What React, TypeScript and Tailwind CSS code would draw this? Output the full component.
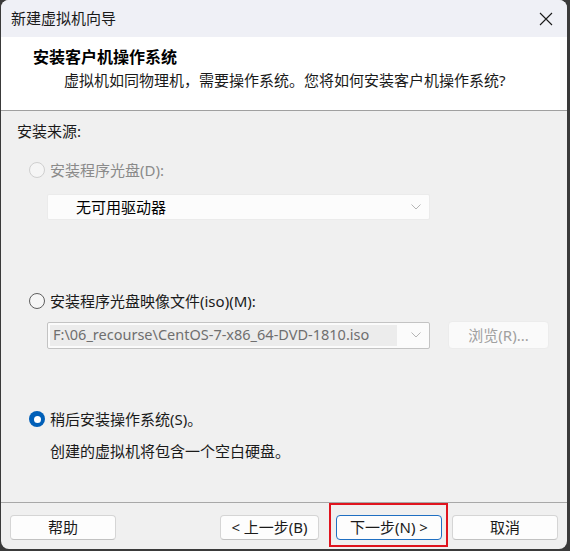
import React from 'react';

const font = { fontFamily: '"Noto Sans", "Noto Sans CJK SC", sans-serif' };

const Chevron: React.FC = () => (
  <svg width="10" height="6" viewBox="0 0 10 6" className="shrink-0">
    <path d="M0.5 0.5 L5 5 L9.5 0.5" fill="none" stroke="#b5b5b5" strokeWidth="1" />
  </svg>
);

const Radio: React.FC<{ state: 'disabled' | 'off' | 'on' }> = ({ state }) => {
  if (state === 'on') {
    return (
      <span className="flex h-4 w-4 shrink-0 items-center justify-center rounded-full bg-[#005fb8]">
        <span className="h-[7px] w-[7px] rounded-full bg-white" />
      </span>
    );
  }
  return (
    <span
      className={
        state === 'disabled'
          ? 'h-4 w-4 shrink-0 rounded-full border border-[#cfcfcf] bg-[#f5f5f5]'
          : 'h-4 w-4 shrink-0 rounded-full border border-[#5f5f5f] bg-[#f6f6f6]'
      }
    />
  );
};

const Button: React.FC<{ label: string; primary?: boolean; className?: string }> = ({ label, primary, className }) => (
  <button
    className={
      'flex h-[25px] items-center justify-center rounded-[4px] border bg-[#fdfdfd] text-[15px] text-[#1b1b1b] ' +
      (primary ? 'border-[#1f6fc2] ' : 'border-[#d5d5d5] border-b-[#c2c2c2] ') +
      (className ?? '')
    }
  >
    {label}
  </button>
);

export default function App() {
  return (
    <div className="flex h-[551px] w-[570px] bg-[#3a3a3a] pb-[2px] pl-[1px] pr-[3px]" style={font}>
      <div className="flex flex-1 flex-col overflow-hidden rounded-[8px] bg-[#f0f0f0]">
        {/* title bar */}
        <div className="flex h-[37px] shrink-0 items-center justify-between bg-[#eff0f6] pl-[10px] pr-[14px]">
          <span className="text-[15px] text-[#1a1a1a]">新建虚拟机向导</span>
          <svg width="14" height="14" viewBox="0 0 14 14">
            <path d="M1 1 L13 13 M13 1 L1 13" stroke="#1a1a1a" strokeWidth="1.1" />
          </svg>
        </div>

        {/* header */}
        <div className="flex h-[73px] shrink-0 flex-col bg-white pl-[32px] pt-[9px]">
          <div className="text-[16px] font-bold leading-[22px] text-black">安装客户机操作系统</div>
          <div className="pl-[31px] pt-[2px] text-[15px] leading-[20px] text-[#1a1a1a]">
            虚拟机如同物理机，需要操作系统。您将如何安装客户机操作系统?
          </div>
        </div>
        <div className="h-px shrink-0 bg-[#a0a0a0]" />

        {/* body */}
        <div className="flex flex-1 flex-col pl-[16px] pt-[10px] text-[15px] text-[#1a1a1a]">
          <div className="leading-[20px]">安装来源:</div>

          <div className="mt-[19px] flex items-center gap-[5px] pl-[12px] leading-[20px] text-[#8a8a8a]">
            <Radio state="disabled" />
            <span>安装程序光盘(D):</span>
          </div>
          <div className="mt-[14px] ml-[30px] flex h-[26px] w-[383px] items-center justify-between rounded-[2px] border border-[#ebebeb] bg-[#fcfcfc] pl-[28px] pr-[8px]">
            <span className="text-black">无可用驱动器</span>
            <Chevron />
          </div>

          <div className="mt-[71px] flex items-center gap-[5px] pl-[12px] leading-[20px]">
            <Radio state="off" />
            <span>安装程序光盘映像文件(iso)(M):</span>
          </div>
          <div className="mt-[10px] flex items-center gap-[18px] pl-[30px]">
            <div className="flex h-[27px] w-[383px] items-center rounded-[2px] border border-[#c3c3c3] bg-[#fbfbfb] p-[2px] pr-[8px]">
              <div className="flex h-full flex-1 items-center bg-[#ececec] pl-[3px] text-[14.5px] text-[#6f6f6f]">
                F:\06_recourse\CentOS-7-x86_64-DVD-1810.iso
              </div>
              <div className="flex w-[24px] justify-end">
                <Chevron />
              </div>
            </div>
            <div className="flex h-[28px] w-[101px] items-center justify-center rounded-[4px] border border-[#ececec] bg-[#fafafa] text-[#a0a0a0]">
              浏览(R)...
            </div>
          </div>

          <div className="mt-[60px] flex items-center gap-[5px] pl-[12px] leading-[20px]">
            <Radio state="on" />
            <span>稍后安装操作系统(S)。</span>
          </div>
          <div className="mt-[12px] pl-[33px] leading-[20px]">创建的虚拟机将包含一个空白硬盘。</div>
        </div>

        {/* footer */}
        <div className="h-px shrink-0 bg-[#a8a8a8]" />
        <div className="flex h-[46px] shrink-0 items-start pl-[9px] pt-[12px]">
          <Button label="帮助" className="w-[106px]" />
          <Button label="< 上一步(B)" className="ml-[104px] w-[99px]" />
          <div className="relative ml-[17px]">
            <Button label="下一步(N) >" primary className="w-[106px]" />
            <div className="pointer-events-none absolute -bottom-[7px] -left-[7px] -right-[6px] -top-[12px] border-2 border-[#e0141e]" />
          </div>
          <Button label="取消" className="ml-[10px] w-[106px]" />
        </div>
      </div>
    </div>
  );
}
